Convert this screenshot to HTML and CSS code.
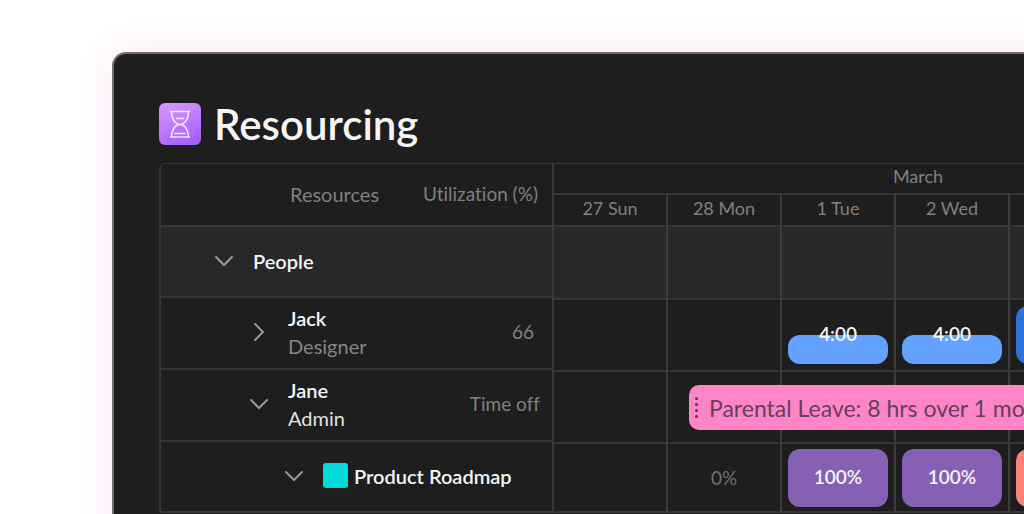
FILE: index.html
```html
<!DOCTYPE html>
<html lang="en">
<head>
<meta charset="utf-8">
<title>Resourcing</title>
<link rel="stylesheet" href="styles.css">
</head>
<body>
<main class="panel">
  <header class="title-bar">
    <svg class="app-icon" viewBox="0 0 42 42" aria-hidden="true">
      <defs>
        <linearGradient id="tile" x1="0.2" y1="0" x2="0.6" y2="1">
          <stop offset="0" stop-color="#d596ff"/>
          <stop offset="1" stop-color="#a55fff"/>
        </linearGradient>
      </defs>
      <rect width="42" height="42" rx="6" fill="url(#tile)"/>
      <path d="M11.500 8.500H30.500M11.500 34H30.500M12.500 8.500C12.500 15 15.500 21.500 21 21.500C26.500 21.500 29.500 15 29.500 8.500M12.500 34C12.500 28 15.500 21.500 21 21.500C26.500 21.500 29.500 28 29.500 34M17.500 15.500H24.500M16 30.500H26" fill="none" stroke="#f8e6ff" stroke-width="1.500" stroke-linecap="round"/>
    </svg>
    <h1 class="title">Resourcing</h1>
  </header>
  <div class="planner">
    <table class="resources">
      <colgroup><col class="col-name"><col></colgroup>
      <thead>
        <tr class="row-head"><th class="head-name">Resources</th><th class="head-util">Utilization (%)</th></tr>
      </thead>
      <tbody>
        <tr class="row-group">
          <td colspan="2"><div class="entry level-1">
            <button class="toggle" type="button" aria-label="Collapse People"><svg class="chevron" viewBox="0 0 20 20"><path d="M2 6L10 14L18 6"/></svg></button>
            <span class="name">People</span>
          </div></td>
        </tr>
        <tr class="row-person">
          <td><div class="entry level-2">
            <button class="toggle" type="button" aria-label="Expand Jack"><svg class="chevron" viewBox="0 0 20 20"><path d="M6 2L14 10L6 18"/></svg></button>
            <div class="person"><span class="name">Jack</span><span class="role">Designer</span></div>
          </div></td>
          <td class="util">66</td>
        </tr>
        <tr class="row-person">
          <td><div class="entry level-2">
            <button class="toggle" type="button" aria-label="Collapse Jane"><svg class="chevron" viewBox="0 0 20 20"><path d="M2 6L10 14L18 6"/></svg></button>
            <div class="person"><span class="name">Jane</span><span class="role role-bright">Admin</span></div>
          </div></td>
          <td class="util util-note">Time off</td>
        </tr>
        <tr class="row-project">
          <td colspan="2"><div class="entry level-3">
            <button class="toggle" type="button" aria-label="Collapse Product Roadmap"><svg class="chevron" viewBox="0 0 20 20"><path d="M2 6L10 14L18 6"/></svg></button>
            <span class="project"><span class="swatch"></span><span class="name">Product Roadmap</span></span>
          </div></td>
        </tr>
      </tbody>
    </table>
    <table class="timeline">
      <colgroup><col class="day"><col class="day"><col class="day"><col class="day"><col></colgroup>
      <thead>
        <tr class="row-month"><th colspan="5">March</th></tr>
        <tr class="row-days"><th>27 Sun</th><th>28 Mon</th><th>1 Tue</th><th>2 Wed</th><th></th></tr>
      </thead>
      <tbody>
        <tr class="time-group"><td></td><td></td><td></td><td></td><td></td></tr>
        <tr class="time-person">
          <td></td><td></td>
          <td><div class="slot"><div class="fill half"></div><span class="amount">4:00</span></div></td>
          <td><div class="slot"><div class="fill half"></div><span class="amount">4:00</span></div></td>
          <td><div class="slot"><div class="fill full"></div></div></td>
        </tr>
        <tr class="time-person">
          <td></td>
          <td class="leave-start"><div class="leave"><span class="grip"><i></i><i></i><i></i><i></i></span>Parental Leave: 8 hrs over 1 month</div></td>
          <td></td><td></td><td></td>
        </tr>
        <tr class="time-project">
          <td></td>
          <td class="idle">0%</td>
          <td><div class="slot"><div class="fill booked"></div><span class="amount">100%</span></div></td>
          <td><div class="slot"><div class="fill booked"></div><span class="amount">100%</span></div></td>
          <td><div class="slot"><div class="fill over"></div></div></td>
        </tr>
      </tbody>
    </table>
  </div>
</main>
</body>
</html>
```
FILE: styles.css
```css
* {
  box-sizing: border-box;
}

body {
  margin: 0;
  height: 100vh;
  overflow: hidden;
  display: flex;
  background: #fff;
  color: #f5f5f5;
  font: 20px/28px Lato, "Open Sans", sans-serif;
  font-variant-ligatures: none;
}

/* The panel runs past the right and bottom edges of the window. */
.panel {
  flex: 1 0 auto;
  width: calc(100% + 148px);
  min-height: 100vh;
  margin: 52px 0 0 112px;
  padding: 49px 0 0 45px;
  border: 2px solid #756b76;
  border-radius: 14px 0 0 0;
  background: #1e1e1e;
  box-shadow: 0 0 44px #ffe4f5;
}

.title-bar {
  display: flex;
  align-items: center;
  gap: 13px;
  height: 42px;
}

.app-icon {
  width: 42px;
  height: 42px;
}

.title {
  margin: 0;
  font-size: 42px;
  line-height: 42px;
  font-weight: 600;
}

.planner {
  display: flex;
  align-items: flex-start;
  margin-top: 18px;
}

table {
  table-layout: fixed;
  border-collapse: separate;
  border-spacing: 0;
  border-top: 1px solid #3a3a3b;
}

th,
td {
  padding: 0;
  border-bottom: 2px solid #353536;
}

th {
  color: #808080;
  font-weight: 400;
}

.resources {
  flex: none;
  width: 395px;
  border-left: 2px solid #333334;
  border-right: 2px solid #383839;
  border-top-left-radius: 6px;
}

.resources th,
.resources td {
  padding-bottom: 2px;
}

.col-name {
  width: 240px;
}

.row-head {
  height: 63px;
}

.head-name {
  padding-left: 129px;
  text-align: left;
}

.head-util {
  padding-right: 14px;
  font-size: 19px;
  text-align: right;
}

.row-group,
.row-project {
  height: 71px;
}

.row-person,
.time-person {
  height: 72px;
}

.row-group td,
.time-group td {
  background: #28282a;
}

.entry {
  display: flex;
  align-items: center;
  gap: 19px;
}

.level-1 {
  padding-left: 53px;
}

.level-2 {
  padding-left: 88px;
}

.level-3 {
  padding-left: 123px;
}

.toggle {
  width: 20px;
  height: 20px;
  padding: 0;
  border: 0;
  background: none;
}

.chevron {
  display: block;
  width: 20px;
  height: 20px;
  fill: none;
  stroke: #999;
  stroke-width: 2;
  stroke-linecap: round;
}

.name {
  font-weight: 600;
}

.person {
  display: flex;
  flex-direction: column;
}

.role {
  color: #858585;
}

.role-bright {
  color: #e2e2e2;
}

.util {
  padding-right: 18px;
  color: #808080;
  font-size: 19px;
  text-align: right;
}

.util-note {
  padding-right: 12px;
}

.project {
  display: flex;
  align-items: center;
  gap: 6px;
}

.swatch {
  width: 25px;
  height: 25px;
  border-radius: 3px;
  background: #00d9d9;
}

.timeline {
  flex: 1;
  font-size: 18px;
}

.day {
  width: 114px;
}

.timeline td,
.row-days th {
  border-right: 2px solid #3d3d3e;
}

.timeline th {
  padding-bottom: 5px;
  line-height: 24px;
}

.row-month {
  height: 31px;
}

.row-days {
  height: 32px;
}

.time-group {
  height: 73px;
}

.time-project {
  height: 69px;
}

.slot {
  display: grid;
  height: 58px;
  margin: 0 6px;
}

.fill,
.amount {
  grid-area: 1 / 1;
}

.fill {
  border-radius: 12px;
}

.half {
  align-self: end;
  height: 29px;
  background: #63a3ff;
}

.full {
  background: #2c73dc;
}

.booked {
  background: #8660b5;
}

.over {
  background: #ff8276;
}

.amount {
  place-self: center;
  padding-bottom: 2px;
  font-size: 19px;
  font-weight: 600;
}

.idle {
  color: #707070;
  font-size: 19px;
  text-align: center;
}

.leave-start {
  position: relative;
}

.leave {
  position: absolute;
  top: 13px;
  left: 21px;
  z-index: 1;
  display: flex;
  align-items: center;
  gap: 11px;
  width: 560px;
  height: 45px;
  padding-left: 6px;
  border-radius: 10px;
  background: #ff85c8;
  color: #64405c;
  font-size: 23px;
}

.grip {
  display: grid;
  gap: 3px;
}

.grip i {
  width: 3px;
  height: 3px;
  border-radius: 50%;
  background: #64304f;
}
```
